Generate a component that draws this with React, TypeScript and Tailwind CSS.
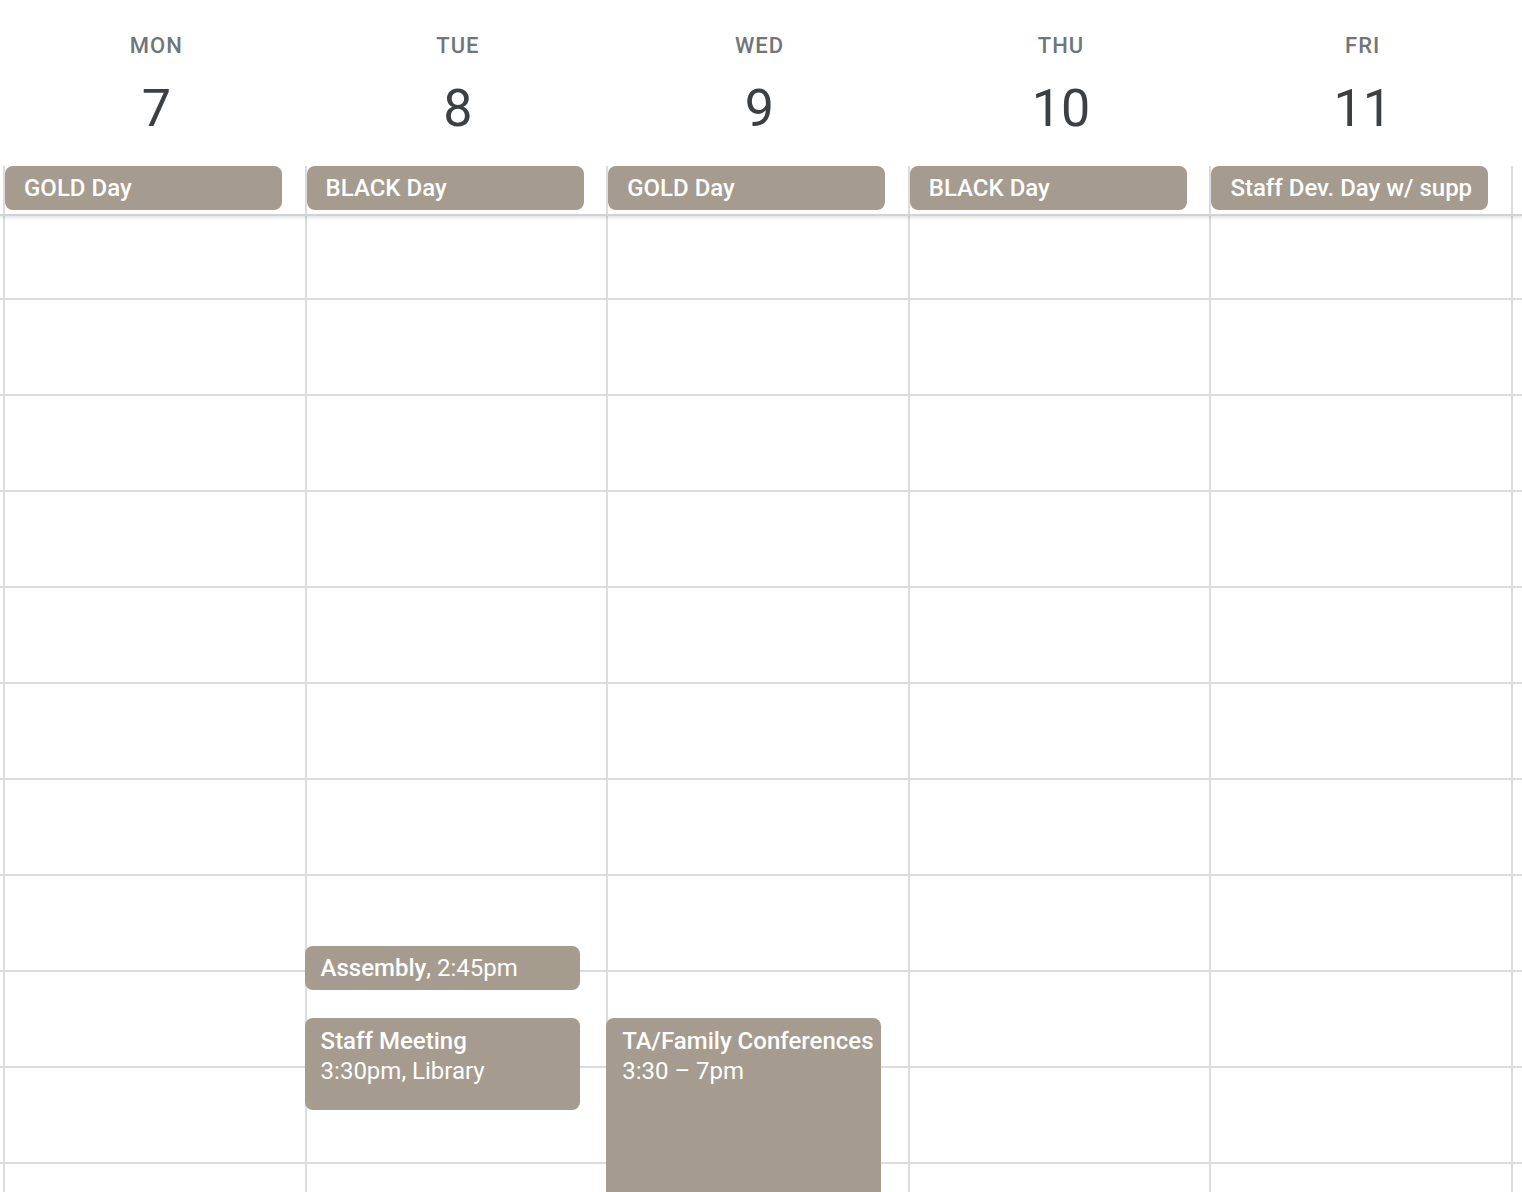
import React from "react";

const days = [
  { name: "MON", num: "7", chip: "GOLD Day" },
  { name: "TUE", num: "8", chip: "BLACK Day" },
  { name: "WED", num: "9", chip: "GOLD Day" },
  { name: "THU", num: "10", chip: "BLACK Day" },
  { name: "FRI", num: "11", chip: "Staff Dev. Day w/ supp" },
];

type Ev = { title: string; rest?: string; second?: string; top: number; height: number };

const events: Record<number, Ev[]> = {
  1: [
    { title: "Assembly", rest: ", 2:45pm", top: 730, height: 44 },
    { title: "Staff Meeting", second: "3:30pm, Library", top: 802, height: 92 },
  ],
  2: [{ title: "TA/Family Conferences", second: "3:30 – 7pm", top: 802, height: 332 }],
};

const font = { fontFamily: "Roboto, 'Liberation Sans', sans-serif" };

function Cells() {
  return (
    <div className="flex flex-col flex-1">
      <div className="h-[84px] shrink-0 border-b-2 border-[#dadce0]" />
      {Array.from({ length: 9 }).map((_, i) => (
        <div key={i} className="h-[96px] shrink-0 border-b-2 border-[#dadce0]" />
      ))}
      <div className="flex-1" />
    </div>
  );
}

export default function App() {
  return (
    <div className="h-[1192px] w-[1522px] overflow-hidden bg-white flex flex-col" style={font}>
      {/* header */}
      <div className="flex h-[166px] shrink-0">
        <div className="w-[3px] shrink-0" />
        {days.map((d) => (
          <div key={d.name} className="w-[301.6px] shrink-0 pl-[5px] flex flex-col items-center">
            <div className="pt-[30px] h-[62px] text-[22px] leading-[32px] font-medium tracking-[1px] text-[#70757a]">
              {d.name}
            </div>
            <div className="mt-[19px] text-[52px] leading-[56px] text-[#3c4043]">{d.num}</div>
          </div>
        ))}
        <div className="flex-1" />
      </div>

      {/* all-day row */}
      <div className="flex h-[50px] shrink-0 border-b-2 border-[#d0d2d6] shadow-[0_2px_3px_rgba(0,0,0,0.10)] relative z-10">
        <div className="w-[3px] shrink-0" />
        {days.map((d) => (
          <div key={d.name} className="w-[301.6px] shrink-0 border-l-2 border-[#dadce0]">
            <div className="h-[44px] w-[277px] rounded-[8px] bg-[#a59b8f] text-white text-[24px] font-medium leading-[44px] pl-[19px] whitespace-nowrap overflow-hidden">
              {d.chip}
            </div>
          </div>
        ))}
        <div className="flex-1 border-l-2 border-[#dadce0]" />
      </div>

      {/* body */}
      <div className="flex flex-1 min-h-0">
        <div className="w-[3px] shrink-0 flex">
          <Cells />
        </div>
        {days.map((d, i) => (
          <div key={d.name} className="w-[301.6px] shrink-0 border-l-2 border-[#dadce0] relative flex">
            <Cells />
            {(events[i] || []).map((e) => (
              <div
                key={e.title}
                className={`absolute left-[-2px] w-[275px] rounded-[8px] bg-[#a59b8f] text-white text-[24px] leading-[30px] pl-[16px] whitespace-nowrap overflow-hidden ${e.rest ? "pt-[7px]" : "pt-[8px]"}`}
                style={{ top: e.top, height: e.height }}
              >
                {e.rest ? (
                  <div>
                    <span className="font-medium">{e.title}</span>
                    <span>{e.rest}</span>
                  </div>
                ) : (
                  <>
                    <div className="font-medium">{e.title}</div>
                    <div>{e.second}</div>
                  </>
                )}
              </div>
            ))}
          </div>
        ))}
        <div className="flex-1 border-l-2 border-[#dadce0] flex">
          <Cells />
        </div>
      </div>
    </div>
  );
}
